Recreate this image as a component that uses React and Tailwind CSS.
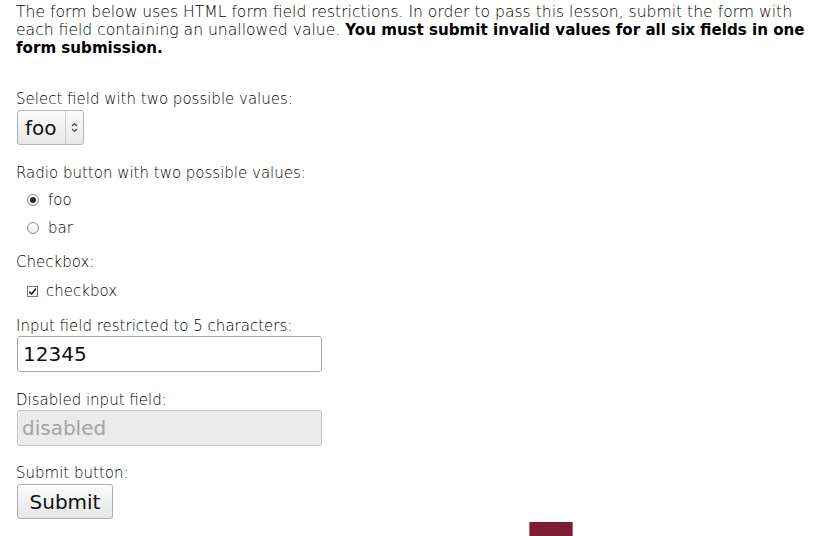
// Form field restrictions lesson
import React from "react";

const font = { fontFamily: '"DejaVu Sans", Verdana, sans-serif' };

const Label = ({ children, className = "" }) => (
  <div className={`text-[15px] leading-[18px] font-extralight text-black ${className}`}>{children}</div>
);

const Radio = ({ checked }) => (
  <span className="w-[12px] h-[12px] rounded-full border border-[#8a8a8a] bg-gradient-to-b from-white to-[#ececec] flex items-center justify-center">
    {checked && <span className="w-[6px] h-[6px] rounded-full bg-[#2a2a2a]" />}
  </span>
);

export default function App() {
  return (
    <div className="relative w-[832px] h-[536px] bg-white overflow-hidden px-4 pt-[3px]" style={font}>
      <p className="text-[15.6px] leading-[18px] font-extralight text-black">
        The form below uses HTML form field restrictions. In order to pass this lesson, submit the form with
        each field containing an unallowed value.{" "}
        <b className="font-bold text-[15.1px]">You must submit invalid values for all six fields in one form submission.</b>
      </p>

      <Label className="mt-[33px]">Select field with two possible values:</Label>
      <div className="mt-[2px] ml-px w-[67px] h-[35px] rounded-[3px] border border-[#b3b3b3] bg-gradient-to-b from-[#fbfbfb] to-[#e8e8e8] flex items-center">
        <span className="pl-[7px] text-[20px] text-[#111] leading-none w-[47px]">foo</span>
        <span className="h-full border-l border-[#cfcfcf]" />
        <svg className="ml-[5px]" width="7" height="11" viewBox="0 0 7 11" fill="none" stroke="#444" strokeWidth="1.2">
          <path d="M1 4 L3.5 1.5 L6 4" />
          <path d="M1 7 L3.5 9.5 L6 7" />
        </svg>
      </div>

      <Label className="mt-[19px]">Radio button with two possible values:</Label>
      <div className="mt-[9px] ml-[11px] flex flex-col gap-[10px]">
        <div className="flex items-center gap-[9px] h-[18px]">
          <Radio checked />
          <span className="text-[15px] font-extralight text-black">foo</span>
        </div>
        <div className="flex items-center gap-[9px] h-[18px]">
          <Radio />
          <span className="text-[15px] font-extralight text-black">bar</span>
        </div>
      </div>

      <Label className="mt-[16px]">Checkbox:</Label>
      <div className="mt-[11px] ml-[11px] flex items-center gap-[8px] h-[18px]">
        <span className="w-[11px] h-[11px] border border-[#777] bg-white flex items-center justify-center">
          <svg width="9" height="9" viewBox="0 0 9 9" fill="none" stroke="#222" strokeWidth="1.6">
            <path d="M1.2 4.6 L3.6 7 L8 1.4" />
          </svg>
        </span>
        <span className="text-[15px] font-extralight text-black">checkbox</span>
      </div>

      <Label className="mt-[17px]">Input field restricted to 5 characters:</Label>
      <input
        defaultValue="12345"
        maxLength={5}
        className="block mt-[1px] ml-px w-[305px] h-[36px] rounded-[3px] border border-[#a8a8a8] bg-white px-[5px] text-[20px] text-[#111] outline-none"
        style={font}
      />

      <Label className="mt-[19px]">Disabled input field:</Label>
      <input
        defaultValue="disabled"
        disabled
        className="block mt-[1px] ml-px w-[305px] h-[36px] rounded-[3px] border border-[#c6c6c6] bg-[#ebebeb] px-[4px] text-[20px] text-[#a3a3a3] outline-none"
        style={font}
      />

      <Label className="mt-[18px]">Submit button:</Label>
      <button
        className="block mt-[2px] ml-px w-[96px] h-[35px] rounded-[3px] border border-[#acacac] bg-gradient-to-b from-[#fbfbfb] to-[#e6e6e6] text-[20px] text-[#111]"
        style={font}
      >
        Submit
      </button>

      <div className="absolute left-[529px] top-[522px] w-[44px] h-[14px] bg-[#7c1d33] border-x border-[#b56a7a]" />
    </div>
  );
}
